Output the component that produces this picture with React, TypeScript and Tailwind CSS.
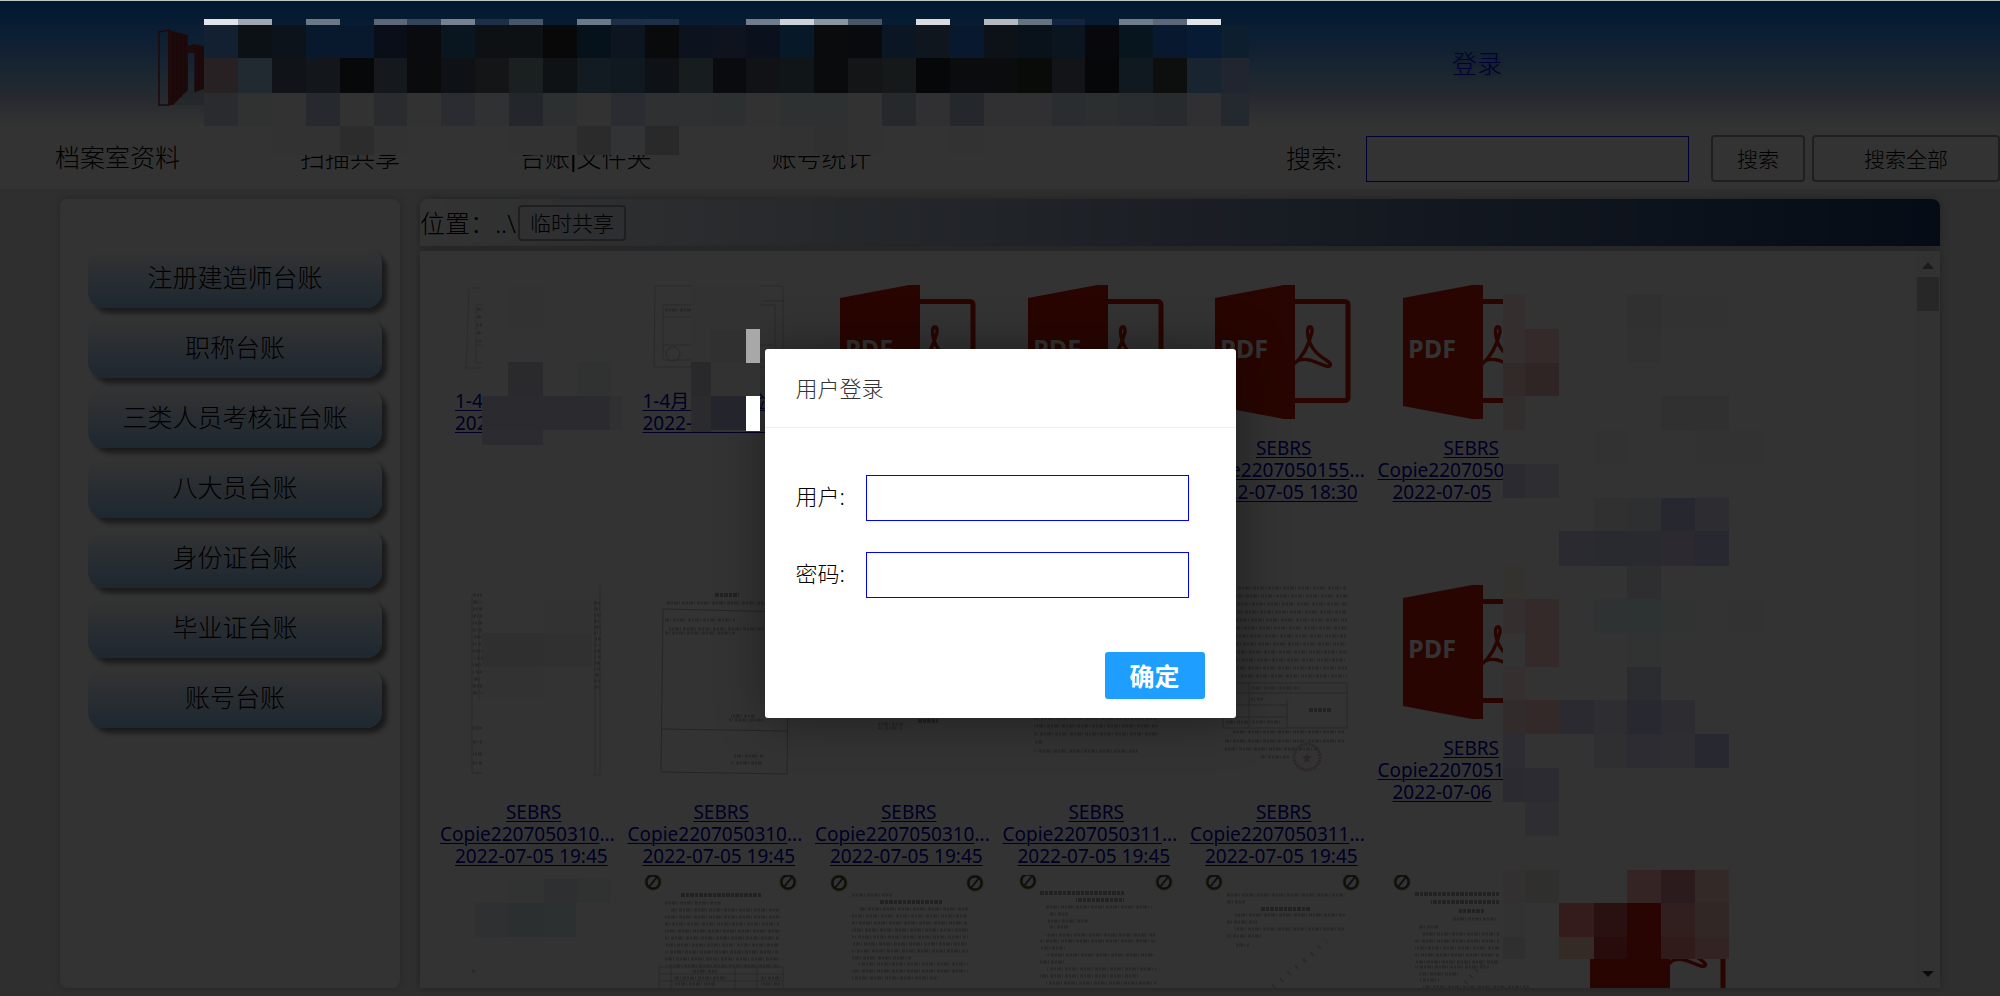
import type { ReactNode } from "react";

const ledgers = [
  "注册建造师台账",
  "职称台账",
  "三类人员考核证台账",
  "八大员台账",
  "身份证台账",
  "毕业证台账",
  "账号台账",
];

/* ---------- masked blocks ---------- */

const bannerColumns = Array.from({ length: 31 }, (_, i) => Math.round(204 + 33.9 * i)).concat(1249);

const bannerRows: { y: number; h: number; colors: string }[] = [
  {
    y: 19,
    h: 6,
    colors:
      "e0e4e8 a0a8b4 - 6c7885 - 5c6878 34455a 76828f 1c2f47 48566a - 6a7a88 1c2f47 1e3048 - - 717d8c ccd2d6 88949e 485666 - d8dce0 - b4bac0 66747f 12243e - 707c8a 5c6878 e2e5e8 -",
  },
  {
    y: 25,
    h: 33,
    colors:
      "122031 0c1116 0c131b 08192e 08192e 0a0e18 0a0b0f 09151f 0e1114 0e1114 080808 06121b 0d1620 080a0b 0d131e 0e131d 0a101c 071828 0a0b0d 090a0e 0a1623 0f161d 08182f 0d1219 09121a 0a1520 08080c 07151e 08182f 081b34 0d1e2e",
  },
  {
    y: 58,
    h: 35,
    colors:
      "272124 222a31 101418 13171b 070809 15181d 0a0b0c 0e1115 141517 1a1f20 0e1214 121b22 101820 0e1217 171d1e 0a0b0e 111215 101618 0a0b0d 141516 151919 060708 0b0c0d 0b0c0e 090b09 121417 060708 101820 0d0e0e 182530 20252f",
  },
  {
    y: 93,
    h: 33,
    colors:
      "292b2f 303232 323232 262a2e 323232 292b2f 323232 2b2b32 303132 23262a 2c3031 323232 2a2c31 2f3032 2f3032 2c3031 323232 2e3132 2d3132 323232 26292c 303032 24272b 303032 303032 2a2d30 2c2f30 2a2d30 282b2e 303032 242930",
  },
  {
    y: 126,
    h: 29,
    colors:
      "333333 333333 323232 323232 2c2c2c 323232 333333 333333 333333 323232 323232 2b2b2b 323334 292929 333333 333333 333333 323232 303030 323232 333333 333333 323232 333333 333333 333333 323332 333333 333333 333333 -",
  },
];

const gridX = [1503, 1525, 1559, 1594, 1627, 1661, 1695, 1729, 1763];
const gridY = [
  295, 329, 363, 396, 430, 464, 498, 531, 566, 599, 633, 667, 700, 734, 768, 802, 836, 870, 903, 937, 959,
];
const gridRows: Record<number, string> = {
  0: "342e2e - - - 303030 323232 323232 -",
  1: "342e2e 352a2a - - 313131 - - -",
  2: "322929 302525 - - - - - -",
  3: "322e2e - - - - 303030 303030 -",
  4: "- - - 323232 - - 323232 323232",
  5: "2a2a30 2d2d32 - - - - - -",
  6: "- - - 303030 2e2f30 27272f 2d2d31 -",
  7: "- - 2a2a30 282a2f 282a2f 2c2a30 282930 -",
  8: "33322f - - - 2e2e31 - - -",
  9: "352e2e 352a2a - 2f3232 2d3233 313232 - 323232",
  10: "- 342a2a - - 313232 - - -",
  11: "352f2f - - - 2b2c30 - - -",
  12: "312b2b 342929 2a2a30 2e2e32 282930 2c2c31 - -",
  13: "2c2c32 - - 2f2f32 2c2c32 2d2d32 282830 -",
  14: "2a2a30 2b2b31 - - - - - -",
  15: "- 2d2d32 - - - - - -",
  17: "323030 2f2f2d - - 352424 2b1b1c 332a28 -",
  18: "323232 - 341c1c 2a1111 280503 311f20 312826 -",
  19: "2f2f2f - 342b27 270c0b 280503 301a1a 332323 -",
};

const looseBlocks: [number, number, number, number, string][] = [
  [482, 285, 139, 146, "#333333"],
  [508, 285, 36, 44, "#323232"],
  [577, 362, 34, 34, "#303232"],
  [482, 396, 128, 34, "#2a2a2f"],
  [610, 396, 12, 34, "#303032"],
  [508, 362, 35, 34, "#2a2a2d"],
  [482, 430, 61, 15, "#2b2b30"],
  [691, 285, 69, 147, "#323232"],
  [711, 329, 35, 33, "#303030"],
  [691, 362, 20, 34, "#29292c"],
  [691, 396, 20, 36, "#2b2b2d"],
  [711, 396, 35, 34, "#24242d"],
  [746, 329, 14, 34, "#a8a8a8"],
  [746, 396, 14, 35, "#ffffff"],
  [482, 575, 110, 210, "#333333"],
  [543, 600, 49, 33, "#323232"],
  [482, 633, 61, 34, "#2f2f2f"],
  [543, 633, 49, 34, "#303030"],
  [482, 667, 61, 33, "#323232"],
  [475, 879, 135, 92, "#333333"],
  [508, 879, 36, 24, "#313232"],
  [544, 879, 33, 24, "#2e2f31"],
  [577, 879, 34, 24, "#303232"],
  [475, 903, 33, 34, "#2e3031"],
  [508, 903, 35, 34, "#2c2f2f"],
  [543, 903, 33, 34, "#2d3030"],
];

function MaskedBlocks() {
  return (
    <svg
      className="pointer-events-none absolute top-0 left-0 h-[996px] w-[2000px]"
      viewBox="0 0 2000 996"
      shapeRendering="crispEdges"
      aria-hidden="true"
    >
      {bannerRows.map((row) =>
        row.colors.split(" ").map((c, i) =>
          c === "-" ? null : (
            <rect
              key={`${row.y}-${i}`}
              x={bannerColumns[i]}
              y={row.y}
              width={bannerColumns[i + 1] - bannerColumns[i]}
              height={row.h}
              fill={`#${c}`}
            />
          ),
        ),
      )}
      <rect x="1503" y="285" width="260" height="551" fill="#333333" />
      <rect x="1503" y="870" width="192" height="89" fill="#333333" />
      {Object.entries(gridRows).map(([r, colors]) =>
        colors.split(" ").map((c, i) =>
          c === "-" ? null : (
            <rect
              key={`${r}-${i}`}
              x={gridX[i]}
              y={gridY[+r]}
              width={gridX[i + 1] - gridX[i]}
              height={gridY[+r + 1] - gridY[+r]}
              fill={`#${c}`}
            />
          ),
        ),
      )}
      {looseBlocks.map(([x, y, w, h, fill], i) => (
        <rect key={i} x={x} y={y} width={w} height={h} fill={fill} />
      ))}
    </svg>
  );
}

/* ---------- drawings ---------- */

function Logo() {
  return (
    <svg className="h-[78px] w-[48px]" viewBox="0 0 48 78" aria-hidden="true">
      <path d="M14 76 L32 62 L47 58 V76 Z" fill="#a8b4c0" opacity="0.5" />
      <path d="M2 3 L12 1 V76 H2 Z" fill="none" stroke="#a02828" strokeWidth="1.500" />
      <path d="M11 1 L31 6 V61 L16 76 H11 Z" fill="#963232" />
      <path d="M16 3 V75 M20 4 V71 M24 5 V68 M28 6 V64" stroke="#7d2020" strokeWidth="1" />
      <path d="M31 17 L37 15 L47 17 V60 L38 63 V24 H31 Z" fill="#963232" />
      <path d="M38 24 V63 M42 18 V61 M45 18 V60" stroke="#7d2020" strokeWidth="1" />
    </svg>
  );
}

function PdfIcon() {
  return (
    <svg className="size-[156px]" viewBox="0 0 156 156" aria-label="PDF">
      <rect x="70" y="26.500" width="73" height="99" rx="3" fill="#fff" stroke="#c81900" strokeWidth="5" />
      <path
        d="M88 90 C98 82 104 70 107 57 C108 50 102 50 102.500 57 C103 70 111 79 121 85 C127 89 127 92 121 91 C112 89 104 81 92 86"
        fill="none"
        stroke="#c81900"
        strokeWidth="3.400"
        strokeLinecap="round"
        strokeLinejoin="round"
      />
      <path d="M10 23 L79 10 H90 V144 H79 L10 131 Z" fill="#c81900" />
      <text x="15" y="83" fill="#fff" className="font-['Open_Sans',sans-serif] text-[25px] font-bold">
        PDF
      </text>
    </svg>
  );
}

function NoSign({ x, y }: { x: number; y: number }) {
  return (
    <g fill="none">
      <circle cx={x} cy={y} r="7" stroke="#a8a040" strokeWidth="3" />
      <circle cx={x} cy={y} r="6.500" stroke="#484848" strokeWidth="2" />
      <path d={`M${x - 4} ${y + 5} L${x + 4} ${y - 5}`} stroke="#484848" strokeWidth="2" />
    </g>
  );
}

type Line = [number, number, number];

function Strokes({ lines, strong = false }: { lines: Line[]; strong?: boolean }) {
  return (
    <g
      stroke={strong ? "#a8a8a8" : "#c8c8c8"}
      strokeWidth={strong ? 4 : 3}
      strokeDasharray={strong ? "4 1 3 1" : "3 1 2 1 4 1 1 2"}
    >
      {lines.map(([x, y, w], i) => (
        <path key={i} d={`M${x} ${y} h${w}`} strokeDashoffset={(i * 7) % 13} />
      ))}
    </g>
  );
}

function block(x: number, y: number, w: number, n: number, step: number): Line[] {
  return Array.from({ length: n }, (_, i) => [x, y + i * step, w] as Line);
}

function Sheet({ children, tall = true }: { children?: ReactNode; tall?: boolean }) {
  return (
    <svg
      className={tall ? "h-[220px] w-[156px] bg-[#fcfcfc]" : "h-[109px] w-[156px] bg-[#fcfcfc]"}
      viewBox={tall ? "0 0 156 220" : "0 0 156 109"}
      aria-hidden="true"
    >
      {children}
    </svg>
  );
}

const sheets: Record<string, ReactNode> = {
  planA: (
    <Sheet tall={false}>
      <path d="M14 13 H130 M14 13 L11 93 H130 M21 30 V88 H40 M21 30 H40 M21 70 H40" fill="none" stroke="#d8d8d8" />
      <Strokes lines={block(22, 34, 8, 5, 8)} />
    </Sheet>
  ),
  planB: (
    <Sheet tall={false}>
      <path
        d="M12 11 H140 V92 H11 Z M20 30 H132 V85 H20 Z M20 42 H48 M20 70 H130 M120 26 H140"
        fill="none"
        stroke="#cccccc"
      />
      <circle cx="30" cy="79" r="7" fill="none" stroke="#c4c4c4" />
      <Strokes lines={[[22, 35, 28]]} />
    </Sheet>
  ),
  register: (
    <Sheet>
      <path d="M17 20 V198 H28 M24 38 V125 M145 10 V200 H138 M140 25 V200" fill="none" stroke="#d0d0d0" />
      <Strokes lines={[...block(18, 20, 10, 15, 7), [18, 153, 10], [18, 167, 10], [18, 179, 10], [18, 188, 10]]} />
      <Strokes lines={block(139, 28, 7, 15, 6)} />
    </Sheet>
  ),
  form: (
    <Sheet>
      <Strokes strong lines={[[72, 20, 24]]} />
      <Strokes lines={[[24, 28, 118], [22, 45, 70], [26, 54, 114], [22, 58, 70], [88, 141, 24], [86, 145, 36], [90, 181, 30], [88, 188, 32]]} />
      <path d="M20 34 L146 37 L144 199 L18 197 Z M19 154 L145 156" fill="none" stroke="#b8b8b8" />
    </Sheet>
  ),
  notice: (
    <Sheet>
      <Strokes lines={[...block(20, 20, 116, 15, 8), [48, 149, 26], [48, 153, 24]]} />
      <Strokes strong lines={[[88, 146, 20]]} />
    </Sheet>
  ),
  letter: (
    <Sheet>
      <Strokes lines={[...block(16, 15, 124, 19, 8), [16, 167, 8], [16, 176, 104]]} />
    </Sheet>
  ),
  report: (
    <Sheet>
      <Strokes lines={block(18, 13, 124, 12, 8)} />
      <path d="M18 108 H142 V153 H18 Z M18 118 H142 M18 130 H82 M18 142 H82 M44 108 V153 M82 125 V153" fill="none" stroke="#c0c0c0" />
      <Strokes strong lines={[[104, 135, 22]]} />
      <Strokes lines={[[28, 157, 112], [20, 166, 120], [20, 174, 94], [56, 182, 28], [46, 113, 50], [46, 124, 12], [20, 147, 56]]} />
      <circle cx="102" cy="182" r="13" fill="none" stroke="#e0bcbc" strokeWidth="3" strokeDasharray="2 1" />
      <path d="M102 177 l1 4 h4 l-3 3 l1 4 l-3 -2 l-3 2 l1 -4 l-3 -3 h4 Z" fill="#e0bcbc" />
    </Sheet>
  ),
  blank: (
    <Sheet>
      <Strokes lines={[[17, 96, 5]]} />
    </Sheet>
  ),
  commitment: (
    <Sheet>
      <NoSign x={10} y={7} />
      <NoSign x={145} y={7} />
      <Strokes strong lines={[[38, 20, 80]]} />
      <Strokes lines={[[22, 28, 56], [28, 35, 108], ...block(22, 42, 114, 8, 7)]} />
      <path d="M16 92 H140 V120 M16 92 V120 M16 99 H140 M16 106 H140 M28 92 V120 M92 92 V120 M114 92 V120" fill="none" stroke="#cccccc" />
      <Strokes lines={[[50, 96, 24], [32, 103, 52], [32, 109, 40], [118, 103, 20], [118, 109, 20]]} />
    </Sheet>
  ),
  sealedA: (
    <Sheet>
      <NoSign x={9} y={8} />
      <NoSign x={145} y={8} />
      <Strokes lines={[[22, 20, 40], [30, 34, 108], ...block(22, 41, 116, 6, 7), [22, 83, 60], [28, 89, 110], [22, 96, 116], [22, 103, 86]]} />
      <Strokes strong lines={[[50, 27, 62]]} />
    </Sheet>
  ),
  sealedB: (
    <Sheet>
      <NoSign x={10} y={6} />
      <NoSign x={146} y={7} />
      <Strokes strong lines={[[22, 18, 84], [58, 25, 48]]} />
      <Strokes
        lines={[[28, 32, 106], [32, 39, 18], [30, 46, 40], [32, 52, 18], [28, 60, 110], [22, 66, 116], [22, 73, 26], [28, 80, 110], [22, 87, 24], [28, 94, 110], [22, 101, 98], [28, 108, 110]]}
      />
    </Sheet>
  ),
  sealedC: (
    <Sheet>
      <NoSign x={9} y={7} />
      <NoSign x={146} y={7} />
      <Strokes strong lines={[[56, 34, 50]]} />
      <Strokes lines={[[22, 20, 116], [22, 27, 18], [30, 40, 110], [22, 47, 30], [30, 54, 110], [22, 61, 34], [30, 70, 14]]} />
      <path d="M68 112 L122 66" stroke="#d4d4d4" strokeWidth="5" strokeDasharray="2 8" />
    </Sheet>
  ),
  sealedD: (
    <Sheet>
      <NoSign x={9} y={7} />
      <Strokes strong lines={[[22, 19, 84], [38, 27, 68], [66, 36, 26]]} />
      <Strokes lines={[[60, 44, 44], [26, 52, 20], [30, 59, 76], ...block(22, 66, 84, 4, 7), [22, 92, 74], [26, 99, 40], [26, 105, 20], [30, 112, 106]]} />
      <path d="M72 108 L92 86" stroke="#d4d4d4" strokeWidth="5" strokeDasharray="2 6" />
    </Sheet>
  ),
};

/* ---------- file grid ---------- */

type FileEntry = {
  art: string;
  pair?: [string, string];
  name?: string;
  more?: boolean;
  date?: string;
};

const files: FileEntry[] = [
  { art: "planA", pair: ["1-4", "202"] },
  { art: "planB", pair: ["1-4月\u3000\u3000\u3000验", "2022-\u3000\u3000\u3000\u3000"] },
  { art: "pdf" },
  { art: "pdf" },
  { art: "pdf", name: "Copie2207050155", more: true, date: "2022-07-05 18:30" },
  { art: "pdf", name: "Copie2207050", date: "2022-07-05" },
  { art: "none" },
  { art: "none" },
  { art: "register", name: "Copie2207050310", more: true, date: "2022-07-05 19:45" },
  { art: "form", name: "Copie2207050310", more: true, date: "2022-07-05 19:45" },
  { art: "notice", name: "Copie2207050310", more: true, date: "2022-07-05 19:45" },
  { art: "letter", name: "Copie2207050311", more: true, date: "2022-07-05 19:45" },
  { art: "report", name: "Copie2207050311", more: true, date: "2022-07-05 19:45" },
  { art: "pdf", name: "Copie2207051", date: "2022-07-06" },
  { art: "none" },
  { art: "none" },
  { art: "blank" },
  { art: "commitment" },
  { art: "sealedA" },
  { art: "sealedB" },
  { art: "sealedC" },
  { art: "sealedD" },
  { art: "pdf" },
];

function FileCell({ file }: { file: FileEntry }) {
  return (
    <li className="h-[300px] min-w-0">
      <a
        href="#file"
        className="flex flex-col text-[19px] leading-[22px] font-normal whitespace-nowrap text-[#0000b8] underline decoration-1 underline-offset-2"
      >
        <span className="flex pl-[15px]">{file.art === "pdf" ? <PdfIcon /> : sheets[file.art]}</span>
        {file.pair && (
          <span className="flex flex-col items-start pt-[6px] pl-[15px]">
            <span>{file.pair[0]}</span>
            <span>{file.pair[1]}</span>
          </span>
        )}
        {file.name && (
          <span className="flex flex-col items-start pt-[6px]">
            <span className="self-center">SEBRS</span>
            <span>
              {file.name}
              {file.more && <span className="inline-block no-underline">...</span>}
            </span>
            <span className="pl-[15px]">{file.date}</span>
          </span>
        )}
      </a>
    </li>
  );
}

/* ---------- dialog ---------- */

function Field({ id, label, type }: { id: string; label: string; type: string }) {
  return (
    <div className="flex items-center justify-between">
      <label htmlFor={id} className="pb-[4px] text-[22px] leading-[30px] text-black">
        {label}
      </label>
      <input id={id} type={type} className="h-[46px] w-[323px] border border-[#0000ff] bg-white px-2 text-[22px] outline-none" />
    </div>
  );
}

function LoginDialog() {
  return (
    <div
      role="dialog"
      aria-labelledby="login-title"
      className="w-[471px] rounded-[3px] bg-white shadow-[1px_1px_50px_rgba(0,0,0,0.4)]"
    >
      <h2
        id="login-title"
        className="flex h-[79px] items-center border-b border-[#eeeeee] px-[31px] text-[22px] font-light text-[#333333]"
      >
        用户登录
      </h2>
      <form className="flex flex-col gap-[31px] pt-[47px] pr-[47px] pl-[31px]" onSubmit={(e) => e.preventDefault()}>
        <Field id="user" label="用户:" type="text" />
        <Field id="password" label="密码:" type="password" />
        <button
          type="submit"
          className="-mr-4 mt-[23px] mb-[19px] h-[47px] w-[100px] self-end rounded-[3px] bg-[#1e9fff] text-[25px] leading-[30px] font-bold text-white"
        >
          确定
        </button>
      </form>
    </div>
  );
}

/* ---------- page ---------- */

export default function App() {
  return (
    <div className="relative flex h-screen flex-col overflow-hidden bg-[#e8e8e8] font-['Noto_Sans','Noto_Sans_CJK_SC',sans-serif] text-[25px] leading-[30px] font-light text-black">
      <header>
        <div className="flex h-[126px] items-center bg-[linear-gradient(to_bottom,#007af0_0px,#3c96ff_34px,#5ca5f5_52px,#88bff0_75px,#bccfea_98px,#f4f4f6_120px,#ffffff_126px)] pr-[498px] pl-[157px]">
          <div className="pt-[10px]">
            <Logo />
          </div>
          <a href="#login" className="ml-auto text-[#0000ff] [text-shadow:1px_3px_4px_rgba(0,0,0,0.3)]">
            登录
          </a>
        </div>
        <div className="flex h-[63px] items-center bg-white pl-[55px]">
          <nav className="flex gap-[120px] whitespace-nowrap">
            <a href="#archive">档案室资料</a>
            <a href="#scan">扫描共享</a>
            <a href="#ledger">
              台账<span className="font-['Liberation_Sans',sans-serif]">|</span>文件夹
            </a>
            <a href="#stats">账号统计</a>
          </nav>
          <form className="ml-auto flex items-center pt-[2px]" onSubmit={(e) => e.preventDefault()}>
            <label htmlFor="search" className="pb-[2px]">
              搜索:
            </label>
            <input
              id="search"
              type="text"
              className="ml-6 h-[46px] w-[323px] border border-[#0000ff] bg-white px-2 outline-none"
            />
            <button type="submit" className="ml-[22px] h-[47px] w-[94px] rounded border-2 border-[#9a9a9a] text-[21px]">
              搜索
            </button>
            <button type="button" className="ml-[7px] h-[47px] w-[188px] rounded border-2 border-[#9a9a9a] text-[21px]">
              搜索全部
            </button>
          </form>
        </div>
      </header>

      <main className="flex min-h-0 flex-1 gap-5 px-[60px] pt-[10px] pb-2">
        <aside className="flex w-[340px] shrink-0 flex-col gap-[10px] rounded-[8px] bg-white pt-[49px] pr-[18px] pl-7 shadow-[0_0_10px_rgba(0,0,0,0.2)]">
          {ledgers.map((name) => (
            <button
              key={name}
              type="button"
              className="h-[60px] rounded-[16px] bg-linear-to-b from-white to-[#96c4f0] pb-[3px] shadow-[5px_5px_5px_#808080]"
            >
              {name}
            </button>
          ))}
        </aside>

        <section className="flex min-w-0 flex-1 flex-col gap-[5px]">
          <div className="flex h-[47px] shrink-0 items-center gap-[2px] rounded-t-[8px] bg-linear-to-r from-white to-[#1a3c70] shadow-[0_0_8px_rgba(0,0,0,0.3)]">
            <span>位置：..\</span>
            <button type="button" className="h-9 w-[108px] rounded border-2 border-[#9a9a9a] text-[21px] leading-[24px]">
              临时共享
            </button>
          </div>

          <div className="flex min-h-0 flex-1 overflow-hidden bg-white shadow-[0_0_8px_rgba(0,0,0,0.3)]">
            <ul className="-mr-[25px] grid flex-1 auto-rows-[300px] grid-cols-8 pt-6 pl-5">
              {files.map((file, i) => (
                <FileCell key={i} file={file} />
              ))}
            </ul>
            <div className="flex w-[25px] shrink-0 flex-col items-center bg-[#f8f8f8] py-[10px]">
              <svg className="h-2 w-3" viewBox="0 0 12 8" aria-hidden="true">
                <path d="M0 8 L6 1 L12 8 Z" fill="#8a8a8a" />
              </svg>
              <div className="mt-2 h-[34px] w-[22px] bg-[#c4c4c4]" />
              <svg className="mt-auto h-2 w-3" viewBox="0 0 12 8" aria-hidden="true">
                <path d="M0 1 L6 7 L12 1 Z" fill="#3c3c3c" />
              </svg>
            </div>
          </div>
        </section>
      </main>

      <div className="absolute inset-0 border-t border-[#c0c8c0] bg-black/80" />
      <div className="absolute inset-0 flex items-center justify-center pt-[71px]">
        <LoginDialog />
      </div>
      <MaskedBlocks />
    </div>
  );
}
